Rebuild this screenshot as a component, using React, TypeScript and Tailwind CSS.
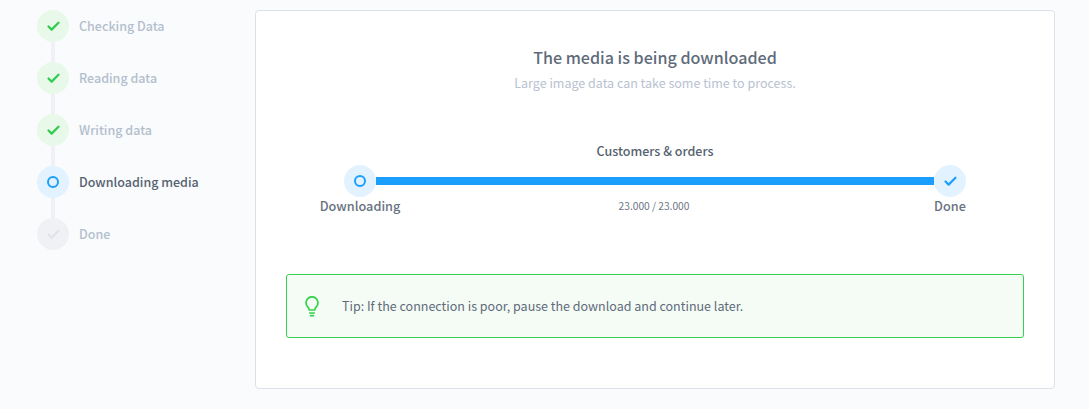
import { Check } from 'lucide-react';

const steps = [
  { label: 'Checking Data', state: 'done' },
  { label: 'Reading data', state: 'done' },
  { label: 'Writing data', state: 'done' },
  { label: 'Downloading media', state: 'active' },
  { label: 'Done', state: 'todo' },
];

function StepIcon({ state }: { state: string }) {
  if (state === 'done') {
    return (
      <div className="w-8 h-8 rounded-full bg-[#e8f9ea] flex items-center justify-center">
        <Check className="w-[15px] h-[15px] text-[#2ecc4f]" strokeWidth={3.5} />
      </div>
    );
  }
  if (state === 'active') {
    return (
      <div className="w-8 h-8 rounded-full bg-[#e3f2ff] flex items-center justify-center">
        <div className="w-3 h-3 rounded-full border-2 border-[#1a9fff]" />
      </div>
    );
  }
  return (
    <div className="w-8 h-8 rounded-full bg-[#eff1f5] flex items-center justify-center">
      <Check className="w-[15px] h-[15px] text-[#e0e3ea]" strokeWidth={3.5} />
    </div>
  );
}

export default function App() {
  return (
    <div className="w-[1089px] h-[409px] overflow-hidden bg-[#f9fbfd] flex pt-[10px] pl-[37px] font-['Noto_Sans_CJK_SC',sans-serif]">
      {/* Steps */}
      <div className="w-[218px] shrink-0 flex flex-col">
        {steps.map((step, i) => (
          <div key={step.label} className="flex">
            <div className="flex flex-col items-center">
              <StepIcon state={step.state} />
              {i < steps.length - 1 && <div className="w-1 h-5 bg-[#eff1f5]" />}
            </div>
            <div
              className={`ml-[10px] h-8 flex items-center text-[12.5px] leading-5 font-medium ${
                step.state === 'active' ? 'text-[#56626f]' : 'text-[#b4bfce]'
              }`}
            >
              {step.label}
            </div>
          </div>
        ))}
      </div>

      {/* Card */}
      <div className="w-[800px] h-[379px] shrink-0 bg-white border border-[#dde0e8] rounded px-[30px]">
        <div className="mt-[34px] text-center text-[16.100px] leading-6 font-medium text-[#5f6b7a]">
          The media is being downloaded
        </div>
        <div className="mt-[4px] text-center text-[12.5px] leading-5 text-[#b8c2d0]">
          Large image data can take some time to process.
        </div>

        <div className="mt-[47px] mx-auto w-[622px] grid grid-cols-[32px_1fr_32px]">
          <div className="col-start-2 h-[25px] pt-[1px] text-center text-[12.5px] font-medium text-[#56626f] leading-5">
            Customers &amp; orders
          </div>
          <div className="col-start-1 w-8 h-8 rounded-full bg-[#e3f2ff] flex items-center justify-center">
            <div className="w-3 h-3 rounded-full border-2 border-[#1a9fff]" />
          </div>
          <div className="flex items-center">
            <div className="w-full h-2 bg-[#1a9fff]" />
          </div>
          <div className="w-8 h-8 rounded-full bg-[#e3f2ff] flex items-center justify-center">
            <Check className="w-[15px] h-[15px] text-[#1a9fff]" strokeWidth={3.5} />
          </div>
          <div className="-mt-[1px] flex justify-center whitespace-nowrap text-[12.700px] font-medium leading-5 text-[#67727f]">
            Downloading
          </div>
          <div className="-mt-[1px] pr-[2px] text-center text-[10.200px] leading-5 text-[#6b7685]">23.000 / 23.000</div>
          <div className="-mt-[1px] flex justify-center whitespace-nowrap text-[12.700px] font-medium leading-5 text-[#67727f]">
            Done
          </div>
        </div>

        <div className="mt-[58px] h-16 bg-[#f5fcf6] border border-[#36d14f] rounded-[3px] flex items-center pl-[18px]">
          {/* lightbulb outline with two base lines */}
          <svg width="14" height="21" viewBox="0 0 14 21" fill="none" stroke="#36d14f" strokeWidth="1.700" strokeLinecap="round">
            <path d="M4.300 14c-.2-1.400-.8-2.300-1.800-3.300A6 6 0 0 1 1 6.800a6 6 0 0 1 12 0c0 1.500-.5 2.800-1.500 3.900-1 1-1.600 1.900-1.800 3.300z" />
            <path d="M4.800 17h4.400" />
            <path d="M5.500 19.700h3" />
          </svg>
          <div className="ml-[23px] text-[12.5px] leading-5 text-[#5f6b7a]">
            Tip: If the connection is poor, pause the download and continue later.
          </div>
        </div>
      </div>
    </div>
  );
}
